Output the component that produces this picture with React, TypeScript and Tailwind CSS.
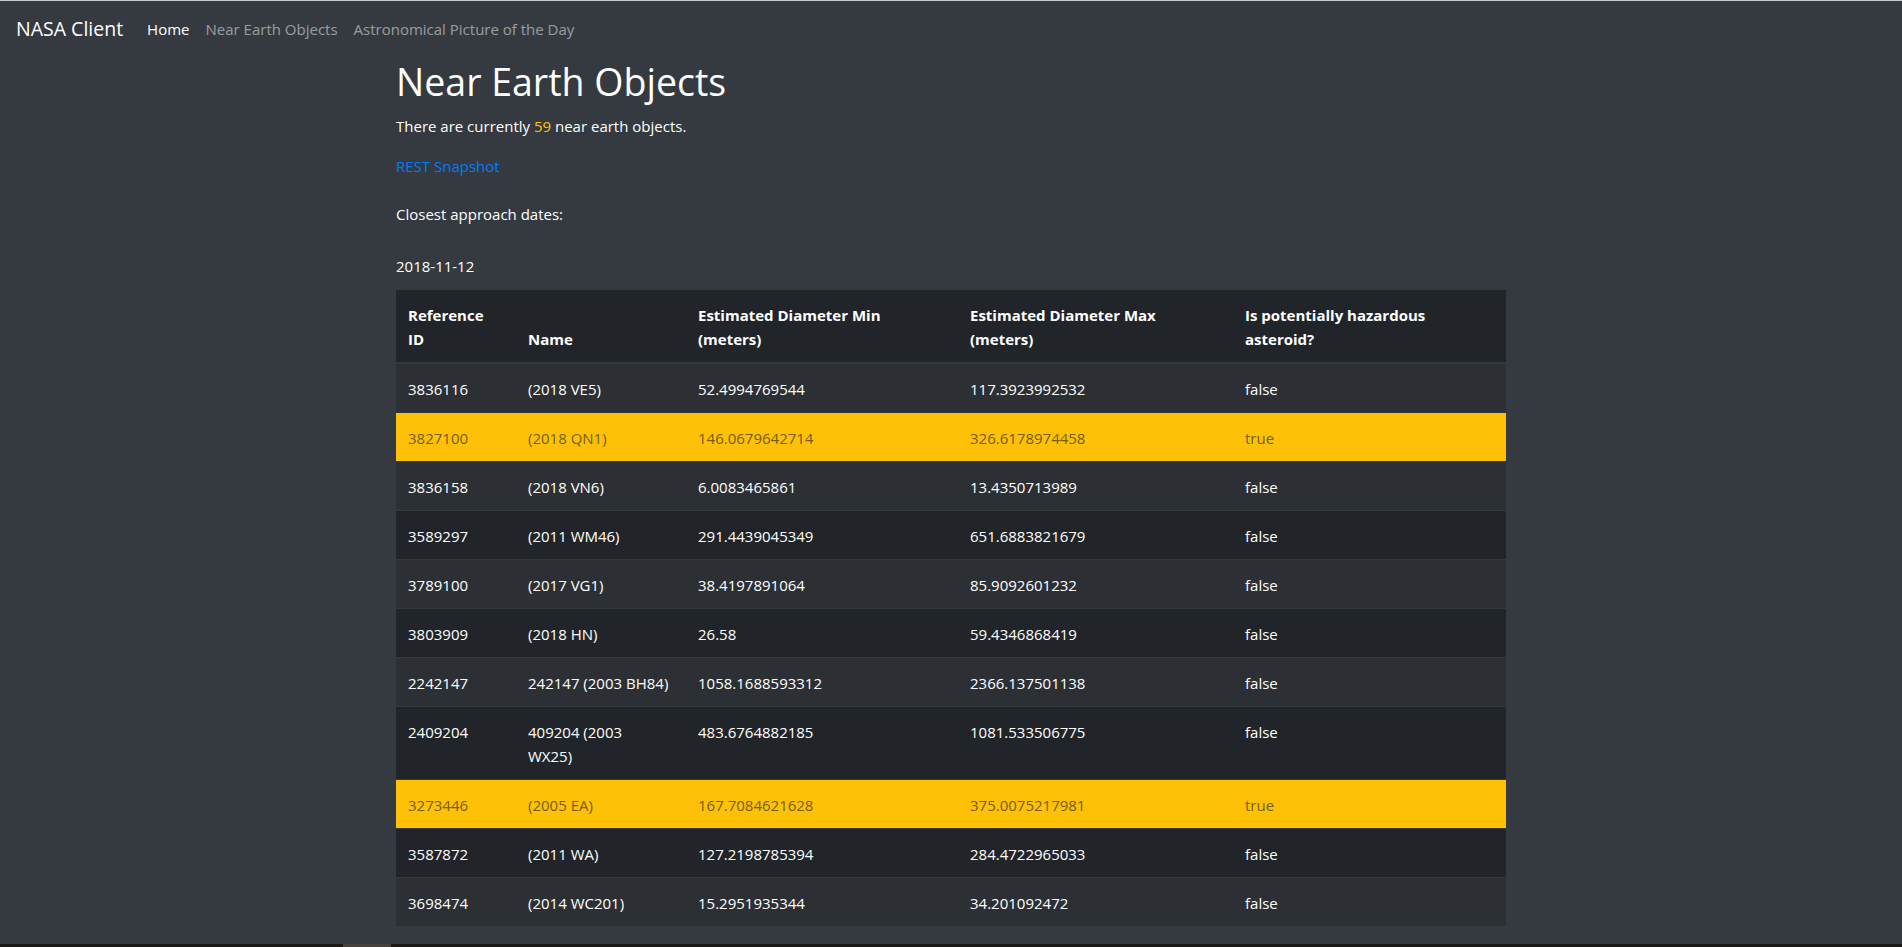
const rows = [
  ["3836116", "(2018 VE5)", "52.4994769544", "117.3923992532", "false"],
  ["3827100", "(2018 QN1)", "146.0679642714", "326.6178974458", "true"],
  ["3836158", "(2018 VN6)", "6.0083465861", "13.4350713989", "false"],
  ["3589297", "(2011 WM46)", "291.4439045349", "651.6883821679", "false"],
  ["3789100", "(2017 VG1)", "38.4197891064", "85.9092601232", "false"],
  ["3803909", "(2018 HN)", "26.58", "59.4346868419", "false"],
  ["2242147", "242147 (2003 BH84)", "1058.1688593312", "2366.137501138", "false"],
  ["2409204", "409204 (2003\nWX25)", "483.6764882185", "1081.533506775", "false"],
  ["3273446", "(2005 EA)", "167.7084621628", "375.0075217981", "true"],
  ["3587872", "(2011 WA)", "127.2198785394", "284.4722965033", "false"],
  ["3698474", "(2014 WC201)", "15.2951935344", "34.201092472", "false"],
];

const th = "px-3 pt-[13px] pb-[11px] border-t border-b-2 border-[#32383e]";

function Navbar() {
  return (
    <nav className="flex items-center h-14 px-4">
      <span className="text-[19.5px] leading-[30px] py-[5px] mr-4 text-white">NASA Client</span>
      <a className="px-2 py-2 text-white">Home</a>
      <a className="px-2 py-2 text-white/50">Near Earth Objects</a>
      <a className="px-2 py-2 text-white/50">Astronomical Picture of the Day</a>
    </nav>
  );
}

export default function App() {
  return (
    <div className="min-h-screen flex flex-col bg-[#343a40] text-white text-[15px] leading-6 border-t border-[#c9cacc] font-['Segoe_UI','Open_Sans',sans-serif]">
      <Navbar />
      <main className="flex-1 w-full max-w-[1140px] mx-auto px-[15px]">
        <h1 className="text-[37.5px] leading-[48px] font-normal pt-px mb-[7px]">Near Earth Objects</h1>
        <p className="pt-px mb-[15px]">
          There are currently <span className="text-[#ffc107]">59</span> near earth objects.
        </p>
        <p className="pt-px mb-[23px]">
          <a className="text-[#007bff]">REST Snapshot</a>
        </p>
        <p className="pt-px mb-[27px]">Closest approach dates:</p>
        <p className="pt-px mb-[11px]">2018-11-12</p>
        <table className="w-full table-fixed bg-[#212529] mb-4">
          <thead>
            <tr className="text-left align-bottom font-bold">
              <th className={`w-[120px] ${th}`}>
                Reference
                <br />
                ID
              </th>
              <th className={`w-[170px] ${th}`}>Name</th>
              <th className={`w-[272px] ${th}`}>Estimated Diameter Min (meters)</th>
              <th className={`w-[275px] ${th}`}>Estimated Diameter Max (meters)</th>
              <th className={th}>Is potentially hazardous asteroid?</th>
            </tr>
          </thead>
          <tbody>
            {rows.map((r, i) => {
              const hazard = r[4] === "true";
              const bg = hazard ? "bg-[#ffc107] text-[#735e19]" : i % 2 === 0 ? "bg-[#2c3034]" : "bg-[#212529]";
              return (
                <tr key={r[0]} className={bg}>
                  {r.map((c, j) => (
                    <td key={j} className="px-3 pt-[13px] pb-[11px] align-top border-t border-[#32383e] whitespace-pre">
                      {c}
                    </td>
                  ))}
                </tr>
              );
            })}
          </tbody>
        </table>
      </main>
      <div className="h-[3px] bg-[#1b1815] flex">
        <div className="ml-[343px] w-[48px] bg-[#46413d]" />
      </div>
    </div>
  );
}
